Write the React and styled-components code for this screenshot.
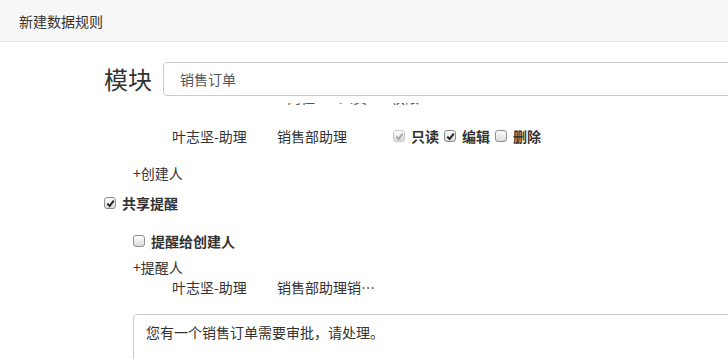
import React, { useLayoutEffect, useRef } from "react";
import styled, { createGlobalStyle } from "styled-components";

const GlobalStyle = createGlobalStyle`
  html, body {
    margin: 0;
    padding: 0;
    background: #fff;
    overflow: hidden;
  }
  body {
    font-family: "Noto Sans CJK SC", "Liberation Sans", sans-serif;
    font-size: 14px;
    color: #333;
  }
`

const Page = styled.div`
  display: flex;
  flex-direction: column;
  height: 100vh;
`
const Header = styled.div`
  height: 41px;
  flex-shrink: 0;
  display: flex;
  align-items: center;
  padding-left: 19px;
  background: #f7f7f7;
  border-bottom: 1px solid #e6e6e6;
  font-size: 14px;
`
const Form = styled.div`
  flex: 1;
  min-height: 0;
  width: 900px;
  display: flex;
  flex-direction: column;
  padding-left: 104px;
`
const ModuleRow = styled.div`
  display: flex;
  align-items: center;
  gap: 11px;
  margin-top: 20px;
`
const ModuleLabel = styled.label`
  width: 48px;
  font-size: 24px;
  line-height: 34px;
`
const Input = styled.input`
  width: 700px;
  height: 34px;
  box-sizing: border-box;
  padding: 0 16px;
  border: 1px solid #ccc;
  border-radius: 4px;
  font: inherit;
  color: #555;
  outline: none;
`
const Scroll = styled.div`
  position: relative;
  flex: 1;
  min-height: 0;
  margin-top: 7px;
  overflow: hidden;
`
const UserRow = styled.div`
  display: flex;
  align-items: center;
  height: ${p => (p.$compact ? "20px" : "36px")};
  padding-left: 68px;
  line-height: 20px;
`
const Cell = styled.span`
  width: ${p => p.$w}px;
  flex-shrink: 0;
  white-space: nowrap;
  overflow: hidden;
  text-overflow: ellipsis;
`
const HeadRow = styled.div`
  display: flex;
  align-items: center;
  gap: 24px;
  height: 36px;
  box-sizing: border-box;
  padding: 0 0 6px 183px;
  color: #555;
`
const Perms = styled.div`
  display: flex;
  align-items: center;
  gap: 5px;
`
const CheckLine = styled.label`
  display: flex;
  align-items: center;
  gap: 6px;
  margin-top: ${p => p.$mt || 0}px;
  padding-left: ${p => p.$indent || 0}px;
  line-height: 20px;
  font-weight: 700;
`
const AddLink = styled.div`
  margin-top: ${p => p.$mt || 0}px;
  padding-left: 29px;
  line-height: 20px;
  cursor: pointer;
`
const Box = styled.span`
  width: 12px;
  height: 12px;
  box-sizing: border-box;
  flex-shrink: 0;
  display: inline-flex;
  align-items: center;
  justify-content: center;
  border: 1px solid ${p => (p.$disabled ? "#c6c6c6" : "#8e8e8e")};
  border-radius: 3px;
  background: linear-gradient(#fdfdfd, #dadada);
`
const Message = styled.textarea`
  width: 700px;
  height: 80px;
  box-sizing: border-box;
  margin: 17px 0 0 29px;
  padding: 7px 12px;
  border: 1px solid #ccc;
  border-radius: 4px;
  font: inherit;
  line-height: 20px;
  color: #333;
  resize: none;
  outline: none;
`

function Check({ checked, disabled }) {
  return (
    <Box $disabled={disabled}>
      {checked && (
        <svg width="9" height="9" viewBox="0 0 10 10">
          <path d="M1.5 5.2 L4 7.8 L8.6 1.8" fill="none" stroke={disabled ? "#a8a8a8" : "#222"} strokeWidth="2.2" />
        </svg>
      )}
    </Box>
  )
}

function App() {
  const scrollRef = useRef(null);
  const headRef = useRef(null);

  // 保持滚动位置：表头只露出底边
  useLayoutEffect(() => {
    if (scrollRef.current && headRef.current) {
      scrollRef.current.scrollTop = headRef.current.offsetTop + 21;
    }
  }, []);

  return (
    <>
      <GlobalStyle />
      <Page>
        <Header>新建数据规则</Header>
        <Form>
          <ModuleRow>
            <ModuleLabel>模块</ModuleLabel>
            <Input defaultValue="销售订单" />
          </ModuleRow>
          <Scroll ref={scrollRef}>
            <CheckLine><Check checked />数据权限</CheckLine>
            <AddLink $mt={8}>+授权人</AddLink>
            <HeadRow ref={headRef}>
              <span>岗位</span><span>人员</span><span>权限</span>
            </HeadRow>
            <UserRow>
              <Cell $w={105}>叶志坚-助理</Cell>
              <Cell $w={116}>销售部助理</Cell>
              <Perms>
                <CheckLine><Check checked disabled />只读</CheckLine>
                <CheckLine><Check checked />编辑</CheckLine>
                <CheckLine><Check />删除</CheckLine>
              </Perms>
            </UserRow>
            <AddLink $mt={9}>+创建人</AddLink>
            <CheckLine $mt={10}><Check checked />共享提醒</CheckLine>
            <CheckLine $mt={18} $indent={29}><Check />提醒给创建人</CheckLine>
            <AddLink $mt={6}>+提醒人</AddLink>
            <UserRow $compact>
              <Cell $w={105}>叶志坚-助理</Cell>
              <Cell $w={100}>销售部助理销售部经理</Cell>
            </UserRow>
            <Message defaultValue="您有一个销售订单需要审批，请处理。" />
          </Scroll>
        </Form>
      </Page>
    </>
  )
}

export default App;
